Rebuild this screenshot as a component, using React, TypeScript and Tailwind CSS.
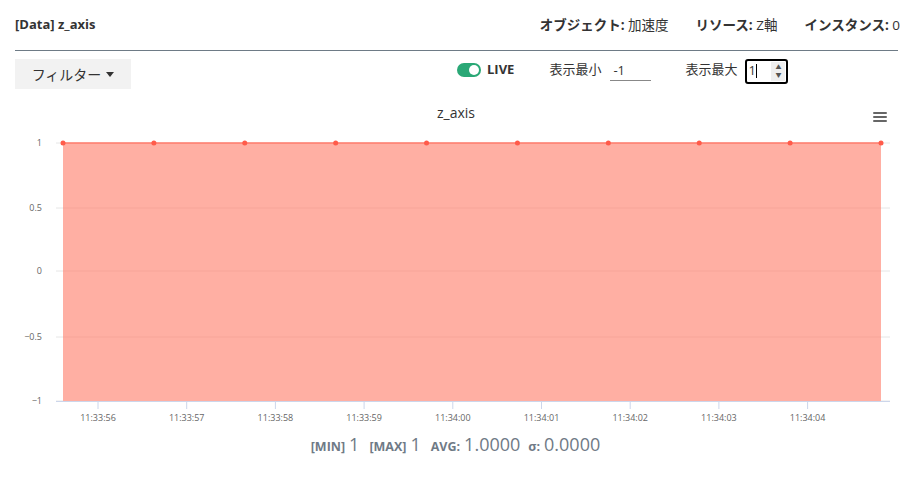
import React from 'react';

const xLabels = ['11:33:56', '11:33:57', '11:33:58', '11:33:59', '11:34:00', '11:34:01', '11:34:02', '11:34:03', '11:34:04'];

const yTicks = [
  { label: '1', y: 47 },
  { label: '0.5', y: 112 },
  { label: '0', y: 175 },
  { label: '−0.5', y: 241 },
  { label: '−1', y: 305 },
];

const Chart: React.FC = () => {
  const left = 63;
  const right = 881;
  const top = 47;
  const bottom = 305;
  const points = Array.from({ length: 10 }, (_, i) => left + ((right - left) / 9) * i);

  return (
    <svg width="913" height="334" viewBox="0 0 913 334" className="block">
      <text x="456" y="22" textAnchor="middle" fontSize="14" fill="#333" fontFamily="'Open Sans', sans-serif">
        z_axis
      </text>
      {/* menu icon */}
      <g fill="#666">
        <rect x="873" y="16" width="14" height="2" rx="1" />
        <rect x="873" y="20" width="14" height="2" rx="1" />
        <rect x="873" y="24" width="14" height="2" rx="1" />
      </g>
      {yTicks.map((t) => (
        <g key={t.label}>
          <line x1="56" x2="890" y1={t.y} y2={t.y} stroke="#e6e6e6" strokeWidth="1" />
          <text x="42" y={t.y + 3} textAnchor="end" fontSize="9" fill="#666" fontFamily="'Open Sans', sans-serif">
            {t.label}
          </text>
        </g>
      ))}
      <rect x={left} y={top} width={right - left} height={bottom - top} fill="#ffafa3" />
      {yTicks.slice(1, 4).map((t) => (
        <line key={t.label} x1={left} x2={right} y1={t.y} y2={t.y} stroke="#f09b8f" strokeOpacity="0.5" strokeWidth="1" />
      ))}
      <line x1={left} x2={right} y1={top} y2={top} stroke="#ff7b6b" strokeWidth="1.5" />
      <line x1="56" x2="890" y1={bottom + 0.5} y2={bottom + 0.5} stroke="#ccd6eb" strokeWidth="1" />
      {points.map((x) => (
        <circle key={x} cx={x} cy={top} r="2.5" fill="#ff5b4a" />
      ))}
      {xLabels.map((l, i) => {
        const x = 98 + i * 88.7;
        return (
          <g key={l}>
            <line x1={x} x2={x} y1={bottom} y2={bottom + 8} stroke="#ccd6eb" strokeWidth="1" />
            <text x={x} y={bottom + 20} textAnchor="middle" fontSize="9" fill="#666" fontFamily="'Open Sans', sans-serif">
              {l}
            </text>
          </g>
        );
      })}
    </svg>
  );
};

const App: React.FC = () => {
  return (
    <div className="w-[913px] h-[477px] bg-white text-[#333] overflow-hidden" style={{ fontFamily: "'Open Sans', 'Noto Sans CJK JP', sans-serif" }}>
      {/* Header */}
      <div className="mx-[15px] h-[51px] flex items-center justify-between border-b border-[#6e7b86]">
        <div className="text-[13px] font-bold">[Data] z_axis</div>
        <div className="flex items-center gap-[27px] text-[13.5px] -mr-[2px]">
          <span>
            <span className="font-bold">オブジェクト: </span>加速度
          </span>
          <span>
            <span className="font-bold">リソース: </span>Z軸
          </span>
          <span>
            <span className="font-bold">インスタンス: </span>0
          </span>
        </div>
      </div>

      {/* Controls */}
      <div className="flex items-start mt-[8px] px-[15px] h-[30px]">
        <button className="w-[116px] h-[30px] bg-[#f2f2f2] text-[14px] text-[#333] flex items-center justify-center gap-[5px]">
          フィルター
          <span className="w-0 h-0 border-l-[4px] border-r-[4px] border-t-[5px] border-l-transparent border-r-transparent border-t-[#333]" />
        </button>
        <div className="ml-[326px] flex items-center h-[22px]">
          <span className="w-[24px] h-[14px] rounded-full bg-[#2aa876] flex items-center justify-end pr-[2px]">
            <span className="w-[10px] h-[10px] rounded-full bg-white" />
          </span>
          <span className="ml-[6px] text-[13px] font-bold">LIVE</span>
          <span className="ml-[35px] text-[13px]">表示最小</span>
          <span className="ml-[9px] w-[41px] h-[22px] border-b border-[#888] text-[13px] pl-[3px] leading-[22px]">-1</span>
          <span className="ml-[34px] text-[13px]">表示最大</span>
          <span className="ml-[8px] w-[43px] h-[25px] border-2 border-black rounded-[3px] flex items-center text-[13px] pl-[1px] mt-[2px]">
            <span>1</span>
            <span className="w-[1px] h-[14px] bg-black" />
            <span className="ml-auto mr-[1px] w-[14px] h-[19px] bg-[#efefef] flex flex-col items-center justify-center text-[6px] leading-[8px] text-[#555]">
              <span>▲</span>
              <span>▼</span>
            </span>
          </span>
        </div>
      </div>

      {/* Chart */}
      <div className="mt-[7px]">
        <Chart />
      </div>

      {/* Stats */}
      <div className="flex items-baseline justify-center text-[#6f7a86] mt-[1px] pr-[2px]">
        <span className="text-[12.5px] font-bold">[MIN]</span>
        <span className="ml-[4px] text-[18px]">1</span>
        <span className="ml-[10px] text-[12.5px] font-bold">[MAX]</span>
        <span className="ml-[4px] text-[18px]">1</span>
        <span className="ml-[10px] text-[12.5px] font-bold">AVG:</span>
        <span className="ml-[4px] text-[18px]">1.0000</span>
        <span className="ml-[8px] text-[12.5px] font-bold">σ:</span>
        <span className="ml-[4px] text-[18px]">0.0000</span>
      </div>
    </div>
  );
};

export default App;
